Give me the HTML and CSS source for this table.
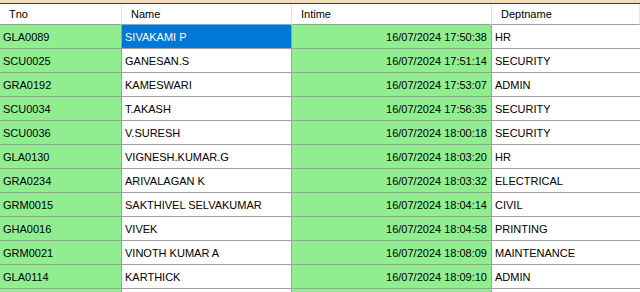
FILE: index.html
```html
<!DOCTYPE html>
<html>
<head>
<meta charset="utf-8">
<link rel="stylesheet" href="styles.css">
</head>
<body>
<div class="topband"></div>
<div class="grid">
  <div class="row head">
    <div class="cell">Tno</div><div class="cell">Name</div><div class="cell">Intime</div><div class="cell">Deptname</div>
  </div>
  <div class="row"><div class="cell g">GLA0089</div><div class="cell sel">SIVAKAMI P</div><div class="cell g r">16/07/2024 17:50:38</div><div class="cell">HR</div></div>
  <div class="row"><div class="cell g">SCU0025</div><div class="cell">GANESAN.S</div><div class="cell g r">16/07/2024 17:51:14</div><div class="cell">SECURITY</div></div>
  <div class="row"><div class="cell g">GRA0192</div><div class="cell">KAMESWARI</div><div class="cell g r">16/07/2024 17:53:07</div><div class="cell">ADMIN</div></div>
  <div class="row"><div class="cell g">SCU0034</div><div class="cell">T.AKASH</div><div class="cell g r">16/07/2024 17:56:35</div><div class="cell">SECURITY</div></div>
  <div class="row"><div class="cell g">SCU0036</div><div class="cell">V.SURESH</div><div class="cell g r">16/07/2024 18:00:18</div><div class="cell">SECURITY</div></div>
  <div class="row"><div class="cell g">GLA0130</div><div class="cell">VIGNESH.KUMAR.G</div><div class="cell g r">16/07/2024 18:03:20</div><div class="cell">HR</div></div>
  <div class="row"><div class="cell g">GRA0234</div><div class="cell">ARIVALAGAN K</div><div class="cell g r">16/07/2024 18:03:32</div><div class="cell">ELECTRICAL</div></div>
  <div class="row"><div class="cell g">GRM0015</div><div class="cell">SAKTHIVEL SELVAKUMAR</div><div class="cell g r">16/07/2024 18:04:14</div><div class="cell">CIVIL</div></div>
  <div class="row"><div class="cell g">GHA0016</div><div class="cell">VIVEK</div><div class="cell g r">16/07/2024 18:04:58</div><div class="cell">PRINTING</div></div>
  <div class="row"><div class="cell g">GRM0021</div><div class="cell">VINOTH KUMAR A</div><div class="cell g r">16/07/2024 18:08:09</div><div class="cell">MAINTENANCE</div></div>
  <div class="row"><div class="cell g">GLA0114</div><div class="cell">KARTHICK</div><div class="cell g r">16/07/2024 18:09:10</div><div class="cell">ADMIN</div></div>
  <div class="row"><div class="cell g"></div><div class="cell"></div><div class="cell g r"></div><div class="cell"></div></div>
</div>
</body>
</html>
```
FILE: styles.css
```css
html, body {
  margin: 0;
  padding: 0;
  background: #ffffff;
  overflow: hidden;
}
body {
  width: 640px;
  height: 292px;
  font-family: "Liberation Sans", Arial, sans-serif;
  font-size: 11px;
  color: #000;
}
.topband {
  height: 3px;
  background: #f6dcb0;
  border-bottom: 1px solid #3c3c3c;
}
.grid {
  height: 288px;
  overflow: hidden;
}
.row {
  display: grid;
  grid-template-columns: 122px 170px 200px 1fr;
  height: 24px;
}
.cell {
  box-sizing: border-box;
  border-right: 1px solid #a0a0a0;
  border-bottom: 1px solid #a0a0a0;
  padding: 0 4px 0 3px;
  display: flex;
  align-items: center;
  white-space: nowrap;
  overflow: hidden;
  background: #fff;
}
.cell:last-child {
  border-right: none;
}
.head {
  height: 21px;
}
.head .cell {
  padding-left: 9px;
  border-right: 1px solid #e5e5e5;
  background: #fff;
}
.g {
  background: #90ee90;
}
.r {
  justify-content: flex-end;
}
.sel {
  background: #0078d7;
  color: #fff;
}
```
